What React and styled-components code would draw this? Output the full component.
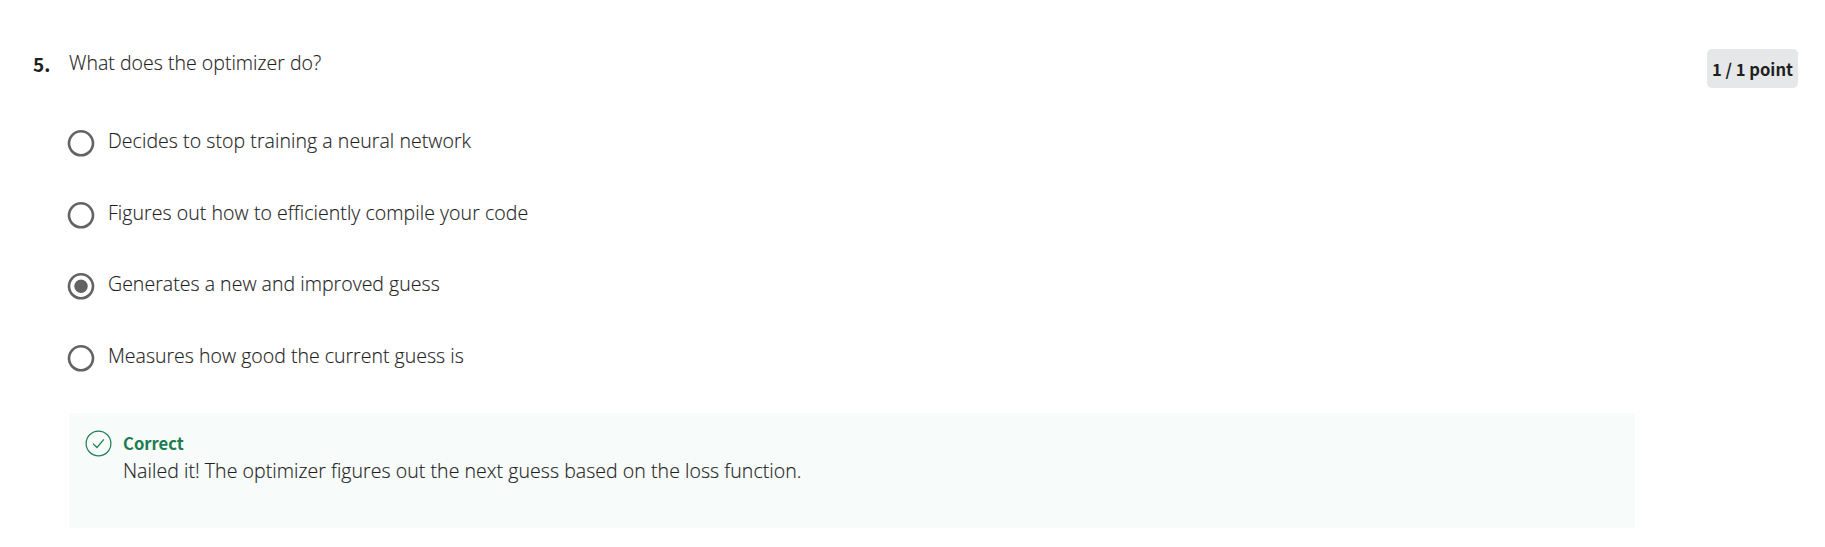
import React from "react";
import styled, { createGlobalStyle } from "styled-components";

const GlobalStyle = createGlobalStyle`
  *, *::before, *::after { box-sizing: border-box; }
  body {
    margin: 0;
    background: #fff;
    color: #1f1f1f;
    font-family: "Open Sans", "Noto Sans", sans-serif;
  }
`;

const Page = styled.main`
  display: flex;
  align-items: flex-start;
  width: 1825px;
  height: 547px;
  padding: 49px 27px 0 33px;
  overflow: hidden;
`;

const Strong = styled.span`
  font-family: "Noto Sans CJK SC", "Open Sans", sans-serif;
  font-weight: 700;
  font-size: ${({ $size }) => $size || 16.6}px;
  line-height: 24px;
  white-space: nowrap;
`;

const Number = styled(Strong)`
  flex: 0 0 36px;
  padding-top: 3px;
`;

const Content = styled.section`
  display: flex;
  flex-direction: column;
  width: 1566px;
`;

const Text = styled.p`
  margin: 0;
  font-size: 19.5px;
  font-weight: 300;
  line-height: 28px;
  letter-spacing: ${({ $tracking }) => $tracking || 0.02}px;
  -webkit-text-stroke: 0.15px currentColor;
  white-space: nowrap;
`;

const Options = styled.div`
  display: flex;
  flex-direction: column;
  margin: 50px 0 0 -2px;
  height: 287px;
`;

const Option = styled.label`
  display: flex;
  align-items: flex-start;
  gap: 13px;
  flex: 0 0 71.67px;
`;

const Radio = styled.svg`
  flex: none;
  width: 28px;
  height: 28px;
  margin-top: 2px;
`;

const Feedback = styled.div`
  display: flex;
  gap: 11px;
  height: 115px;
  margin-top: -1px;
  padding: 17px 16px 0;
  background: #f7fbf9;
`;

const Message = styled.div`
  display: flex;
  flex-direction: column;
  gap: 2px;
  padding-top: 1px;
`;

const Verdict = styled(Strong)`
  color: #1d7c50;
`;

const Points = styled.div`
  display: flex;
  justify-content: center;
  width: 91px;
  height: 39px;
  margin-left: auto;
  padding-top: 8px;
  border-radius: 5px;
  background: #e5e7e8;
`;

const answers = [
  { text: "Decides to stop training a neural network", tracking: 0.06 },
  { text: "Figures out how to efficiently compile your code", tracking: 0.06 },
  { text: "Generates a new and improved guess", tracking: 0.03, selected: true },
  { text: "Measures how good the current guess is", tracking: 0.01 },
];

export default function App() {
  return (
    <>
      <GlobalStyle />
      <Page>
        <Number $size={19}>5.</Number>
        <Content>
          <Text>What does the optimizer do?</Text>
          <Options>
            {answers.map(({ text, tracking, selected }) => (
              <Option key={text}>
                <Radio viewBox="0 0 28 28" fill="none">
                  <circle cx="14" cy="14.3" r="12" stroke="#636363" strokeWidth="2.6" />
                  {selected && <circle cx="14" cy="14.3" r="6.7" fill="#636363" />}
                </Radio>
                <Text $tracking={tracking}>{text}</Text>
              </Option>
            ))}
          </Options>
          <Feedback>
            <svg width="27" height="27" viewBox="0 0 27 27" fill="none" stroke="#1d7c50">
              <circle cx="13.5" cy="13.5" r="12.4" strokeWidth="1.2" />
              <path d="M8 13.6 L12 17.5 L18.9 9.4" strokeWidth="1.2" />
            </svg>
            <Message>
              <Verdict>Correct</Verdict>
              <Text $tracking={0.05}>
                Nailed it! The optimizer figures out the next guess based on the loss function.
              </Text>
            </Message>
          </Feedback>
        </Content>
        <Points>
          <Strong>1 / 1 point</Strong>
        </Points>
      </Page>
    </>
  );
}
